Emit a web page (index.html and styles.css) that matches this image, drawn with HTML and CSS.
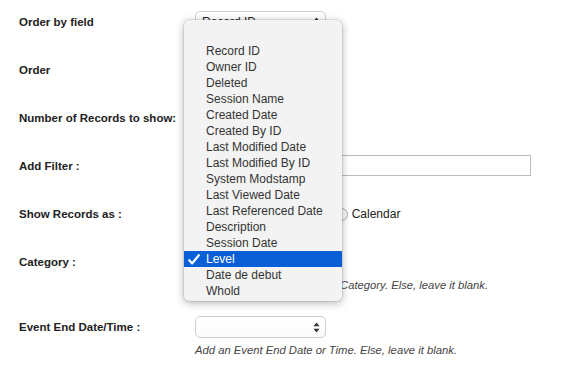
FILE: index.html
```html
<!DOCTYPE html>
<html lang="en">
<head>
    <meta charset="UTF-8">
    <meta name="viewport" content="width=device-width, initial-scale=1.0">
    <title>List Settings</title>
    <link rel="stylesheet" href="styles.css">
</head>
<body>

    <form class="settings">
        <div class="row">
            <label class="label">Order by field</label>
            <div class="control">
                <div class="select">
                    <span class="select-value">Record ID</span>
                    <svg class="arrows" width="7" height="11" viewBox="0 0 7 11"><path d="M3.5 0.5L6.5 4.2H0.5Z M3.5 10.5L6.5 6.8H0.5Z" fill="#333"/></svg>
                </div>
            </div>
        </div>

        <div class="row">
            <label class="label">Order</label>
            <div class="control">
                <div class="select">
                    <span class="select-value">Ascending</span>
                    <svg class="arrows" width="7" height="11" viewBox="0 0 7 11"><path d="M3.5 0.5L6.5 4.2H0.5Z M3.5 10.5L6.5 6.8H0.5Z" fill="#333"/></svg>
                </div>
            </div>
        </div>

        <div class="row">
            <label class="label">Number of Records to show:</label>
            <div class="control">
                <div class="select">
                    <span class="select-value">10</span>
                    <svg class="arrows" width="7" height="11" viewBox="0 0 7 11"><path d="M3.5 0.5L6.5 4.2H0.5Z M3.5 10.5L6.5 6.8H0.5Z" fill="#333"/></svg>
                </div>
            </div>
        </div>

        <div class="row">
            <label class="label">Add Filter :</label>
            <div class="control">
                <div class="text-input"></div>
            </div>
        </div>

        <div class="row">
            <label class="label">Show Records as :</label>
            <div class="control radios">
                <span class="radio-item"><span class="radio checked"></span>List</span>
                <span class="radio-item"><span class="radio"></span>Calendar</span>
            </div>
        </div>

        <div class="row row-help">
            <label class="label">Category :</label>
            <div class="control">
                <div class="select">
                    <span class="select-value">Level</span>
                    <svg class="arrows" width="7" height="11" viewBox="0 0 7 11"><path d="M3.5 0.5L6.5 4.2H0.5Z M3.5 10.5L6.5 6.8H0.5Z" fill="#333"/></svg>
                </div>
                <p class="help">Pick a field that stores Event Category. Else, leave it blank.</p>
            </div>
        </div>

        <div class="row">
            <label class="label">Event End Date/Time :</label>
            <div class="control">
                <div class="select">
                    <span class="select-value"></span>
                    <svg class="arrows" width="7" height="11" viewBox="0 0 7 11"><path d="M3.5 0.5L6.5 4.2H0.5Z M3.5 10.5L6.5 6.8H0.5Z" fill="#333"/></svg>
                </div>
                <p class="help">Add an Event End Date or Time. Else, leave it blank.</p>
            </div>
        </div>
    </form>

    <ul class="menu">
        <li class="option"></li>
        <li class="option">Record ID</li>
        <li class="option">Owner ID</li>
        <li class="option">Deleted</li>
        <li class="option">Session Name</li>
        <li class="option">Created Date</li>
        <li class="option">Created By ID</li>
        <li class="option">Last Modified Date</li>
        <li class="option">Last Modified By ID</li>
        <li class="option">System Modstamp</li>
        <li class="option">Last Viewed Date</li>
        <li class="option">Last Referenced Date</li>
        <li class="option">Description</li>
        <li class="option">Session Date</li>
        <li class="option selected">
            <svg class="check" width="12" height="11" viewBox="0 0 12 11"><path d="M1.2 6.2L4.2 9.4L10.8 1.2" fill="none" stroke="#fff" stroke-width="2.2" stroke-linecap="round" stroke-linejoin="round"/></svg>Level
        </li>
        <li class="option">Date de debut</li>
        <li class="option">Whold</li>
    </ul>

</body>
</html>
```

FILE: styles.css
```css
body {
    font-family: "Liberation Sans", Arial, sans-serif;
    margin: 0;
    background-color: #fff;
    color: #222;
}
.settings {
    padding: 11px 0 0 19px;
}
.row {
    display: grid;
    grid-template-columns: 176px 1fr;
    margin-bottom: 26px;
}
.row-help {
    margin-bottom: 24px;
}
.label {
    font-size: 11.5px;
    font-weight: bold;
    line-height: 22px;
}
.control {
    font-size: 12px;
}
.select {
    width: 123px;
    height: 20px;
    border: 1px solid #cfcfcf;
    border-radius: 5px;
    background: linear-gradient(#fff, #fafafa);
    display: flex;
    align-items: center;
    padding-left: 6px;
}
.select-value {
    flex: 1;
    color: #222;
}
.arrows {
    margin-right: 5px;
}
.text-input {
    width: 334px;
    height: 19px;
    border: 1px solid #bcbcbc;
}
.radios {
    display: flex;
    align-items: center;
    height: 22px;
    padding-left: 96px;
}
.radio-item {
    display: flex;
    align-items: center;
    gap: 4px;
    margin-right: 8px;
}
.radio {
    width: 11px;
    height: 11px;
    border: 1px solid #aaa;
    border-radius: 50%;
    background: #fafafa;
}
.help {
    margin: 5px 0 0;
    font-style: italic;
    font-size: 11.25px;
    line-height: 14px;
    color: #444;
}
.menu {
    position: absolute;
    left: 184px;
    top: 20px;
    width: 158px;
    margin: 0;
    padding: 7px 0 2px;
    list-style: none;
    background-color: #f3f3f3;
    border-radius: 5px;
    box-shadow: 0 2px 8px rgba(0, 0, 0, 0.3), 0 0 0 0.5px rgba(0, 0, 0, 0.15);
}
.option {
    position: relative;
    height: 16px;
    line-height: 16px;
    padding-left: 22px;
    font-size: 12px;
    color: #333;
}
.selected {
    background-color: #0a5fd7;
    color: #fff;
}
.check {
    position: absolute;
    left: 4px;
    top: 3px;
}
```
